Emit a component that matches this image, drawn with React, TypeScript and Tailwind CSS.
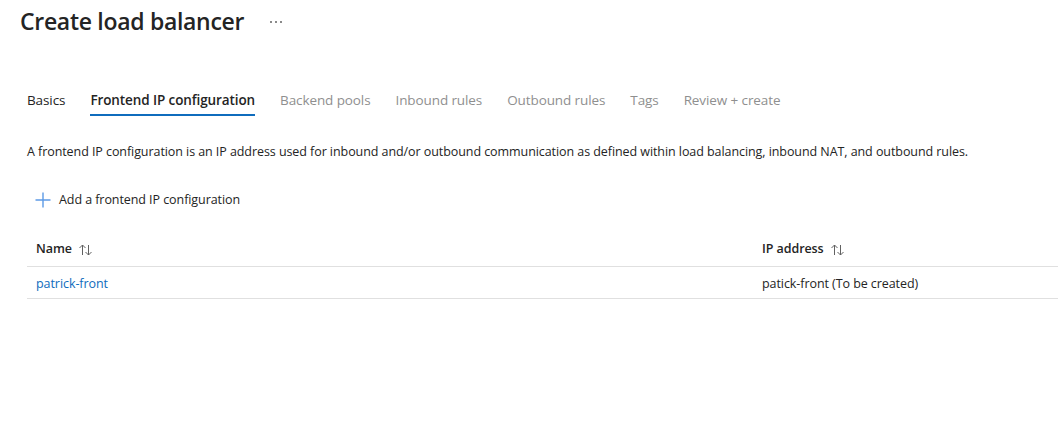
const tabs = [
  { label: "Basics", active: false, done: true },
  { label: "Frontend IP configuration", active: true, done: true },
  { label: "Backend pools", active: false, done: false },
  { label: "Inbound rules", active: false, done: false },
  { label: "Outbound rules", active: false, done: false },
  { label: "Tags", active: false, done: false },
  { label: "Review + create", active: false, done: false },
];

function SortIcon() {
  return (
    <svg width="16" height="14" viewBox="0 0 16 14" className="ml-1.5" fill="none" stroke="#616161" strokeWidth="1">
      <path d="M4.5 12V2M1.5 5l3-3 3 3" />
      <path d="M10.5 2v10M7.5 9l3 3 3-3" />
    </svg>
  );
}

export default function App() {
  return (
    <div
      className="w-[1058px] h-[444px] bg-white text-[#242424] overflow-hidden"
      style={{ fontFamily: '"Open Sans", "Noto Sans", sans-serif' }}
    >
      <div className="flex items-center pl-[20px] pt-[2px] h-[40px]">
        <h1 className="text-[23px] font-semibold tracking-[-0.3px]">Create load balancer</h1>
        <span className="ml-[26px] flex gap-[3px] items-center mt-[2px]">
          <span className="w-[2px] h-[2px] bg-[#8a8a8a]" />
          <span className="w-[2px] h-[2px] bg-[#8a8a8a]" />
          <span className="w-[2px] h-[2px] bg-[#8a8a8a]" />
        </span>
      </div>

      <div className="flex gap-[25px] pl-[27px] mt-[50px] text-[13.5px] tracking-[-0.1px]">
        {tabs.map((t) => (
          <div
            key={t.label}
            className={
              t.active
                ? "pb-[4px] border-b-2 border-[#0f6cbd] font-semibold text-[#242424]"
                : t.done
                ? "pb-[4px] border-b-2 border-transparent text-[#242424]"
                : "pb-[4px] border-b-2 border-transparent text-[#8f8f8f]"
            }
          >
            {t.label}
          </div>
        ))}
      </div>

      <p className="pl-[27px] mt-[27px] text-[12.5px] tracking-[-0.07px]">
        A frontend IP configuration is an IP address used for inbound and/or outbound communication as defined within load balancing, inbound NAT, and outbound rules.
      </p>

      <div className="flex items-center pl-[35px] mt-[29px] text-[12.5px] tracking-[-0.07px]">
        <svg width="16" height="16" viewBox="0 0 16 16" stroke="#5d9be6" strokeWidth="1.4">
          <path d="M8 0.5v15M0.5 8h15" />
        </svg>
        <span className="ml-[8px]">Add a frontend IP configuration</span>
      </div>

      <div className="ml-[27px] mt-[21px] text-[12.5px] tracking-[-0.07px]">
        <div className="flex items-center h-[36px] pt-[3px] border-b border-[#e0e0e0]">
          <div className="w-[726px] flex items-center pl-[9px] font-semibold">
            Name
            <SortIcon />
          </div>
          <div className="flex items-center pl-[9px] font-semibold">
            IP address
            <SortIcon />
          </div>
        </div>
        <div className="flex items-center h-[32px] pt-[4px] border-b border-[#e0e0e0]">
          <div className="w-[726px] pl-[9px] text-[#0f6cbd]">patrick-front</div>
          <div className="pl-[9px]">patick-front (To be created)</div>
        </div>
      </div>
    </div>
  );
}
